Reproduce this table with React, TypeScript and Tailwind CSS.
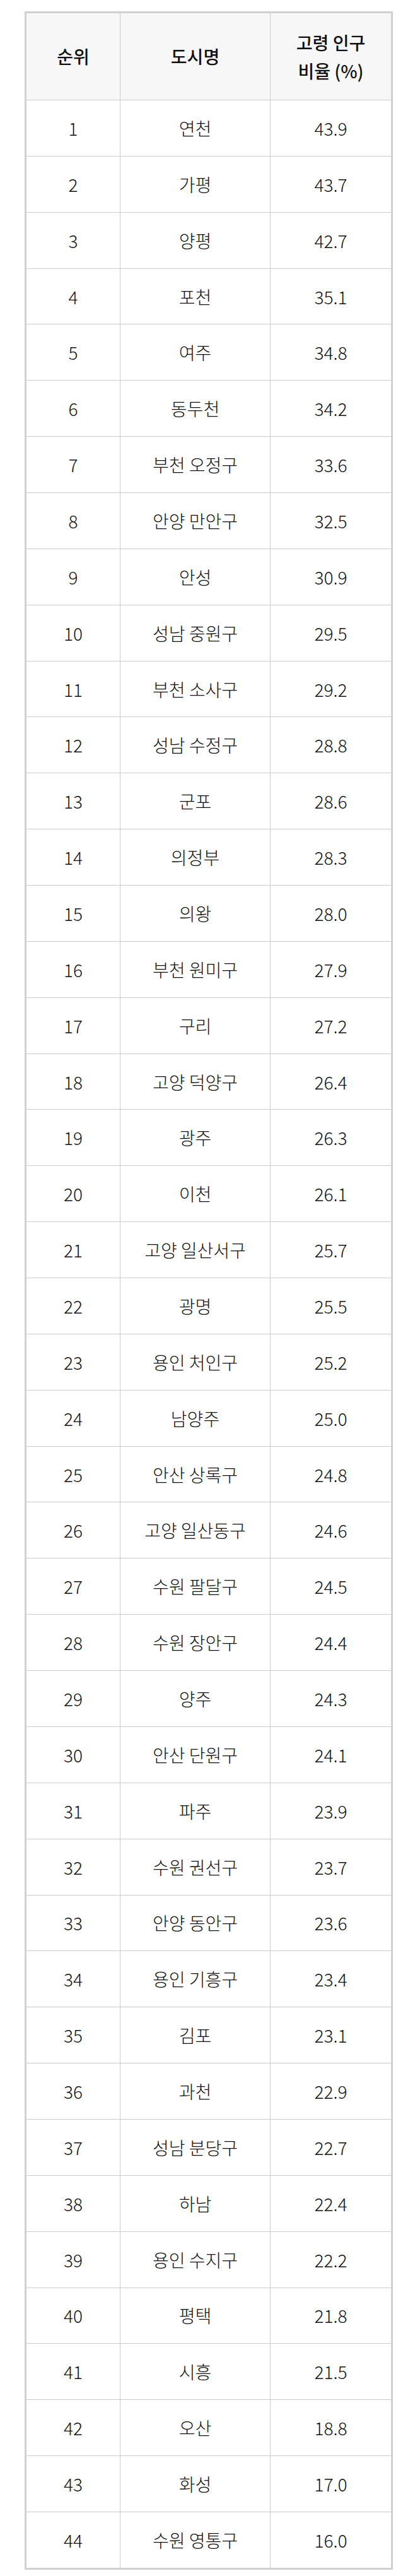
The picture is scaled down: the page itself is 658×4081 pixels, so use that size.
const rows: Array<[number, string, string]> = [
  [1, "연천", "43.9"],
  [2, "가평", "43.7"],
  [3, "양평", "42.7"],
  [4, "포천", "35.1"],
  [5, "여주", "34.8"],
  [6, "동두천", "34.2"],
  [7, "부천 오정구", "33.6"],
  [8, "안양 만안구", "32.5"],
  [9, "안성", "30.9"],
  [10, "성남 중원구", "29.5"],
  [11, "부천 소사구", "29.2"],
  [12, "성남 수정구", "28.8"],
  [13, "군포", "28.6"],
  [14, "의정부", "28.3"],
  [15, "의왕", "28.0"],
  [16, "부천 원미구", "27.9"],
  [17, "구리", "27.2"],
  [18, "고양 덕양구", "26.4"],
  [19, "광주", "26.3"],
  [20, "이천", "26.1"],
  [21, "고양 일산서구", "25.7"],
  [22, "광명", "25.5"],
  [23, "용인 처인구", "25.2"],
  [24, "남양주", "25.0"],
  [25, "안산 상록구", "24.8"],
  [26, "고양 일산동구", "24.6"],
  [27, "수원 팔달구", "24.5"],
  [28, "수원 장안구", "24.4"],
  [29, "양주", "24.3"],
  [30, "안산 단원구", "24.1"],
  [31, "파주", "23.9"],
  [32, "수원 권선구", "23.7"],
  [33, "안양 동안구", "23.6"],
  [34, "용인 기흥구", "23.4"],
  [35, "김포", "23.1"],
  [36, "과천", "22.9"],
  [37, "성남 분당구", "22.7"],
  [38, "하남", "22.4"],
  [39, "용인 수지구", "22.2"],
  [40, "평택", "21.8"],
  [41, "시흥", "21.5"],
  [42, "오산", "18.8"],
  [43, "화성", "17.0"],
  [44, "수원 영통구", "16.0"],
];

const cols = "grid grid-cols-[148px_238px_192px]";

export default function App() {
  return (
    <div
      className="min-h-[4081px] bg-white pl-[39px] pt-[18px] pb-[10px] text-[#111]"
      style={{ fontFamily: '"Noto Sans CJK KR", "Noto Sans", sans-serif' }}
    >
      <div className="w-[584px] border-[3px] border-[#d0d0d0]">
        <div className={`${cols} h-[137px] bg-[#f7f7f7] text-[28px] font-medium leading-[45px]`}>
          <div className="flex items-center justify-center">순위</div>
          <div className="flex items-center justify-center border-l border-[#cccccc]">도시명</div>
          <div className="flex flex-col items-center justify-center border-l border-[#cccccc] text-center">
            <span>고령 인구</span>
            <span>비율 (%)</span>
          </div>
        </div>
        {rows.map(([rank, city, ratio]) => (
          <div
            key={rank}
            className={`${cols} h-[88.864px] border-t border-[#cccccc] text-[28px] font-light`}
          >
            <div className="flex items-center justify-center">{rank}</div>
            <div className="flex items-center justify-center border-l border-[#cccccc]">{city}</div>
            <div className="flex items-center justify-center border-l border-[#cccccc]">{ratio}</div>
          </div>
        ))}
      </div>
    </div>
  );
}
